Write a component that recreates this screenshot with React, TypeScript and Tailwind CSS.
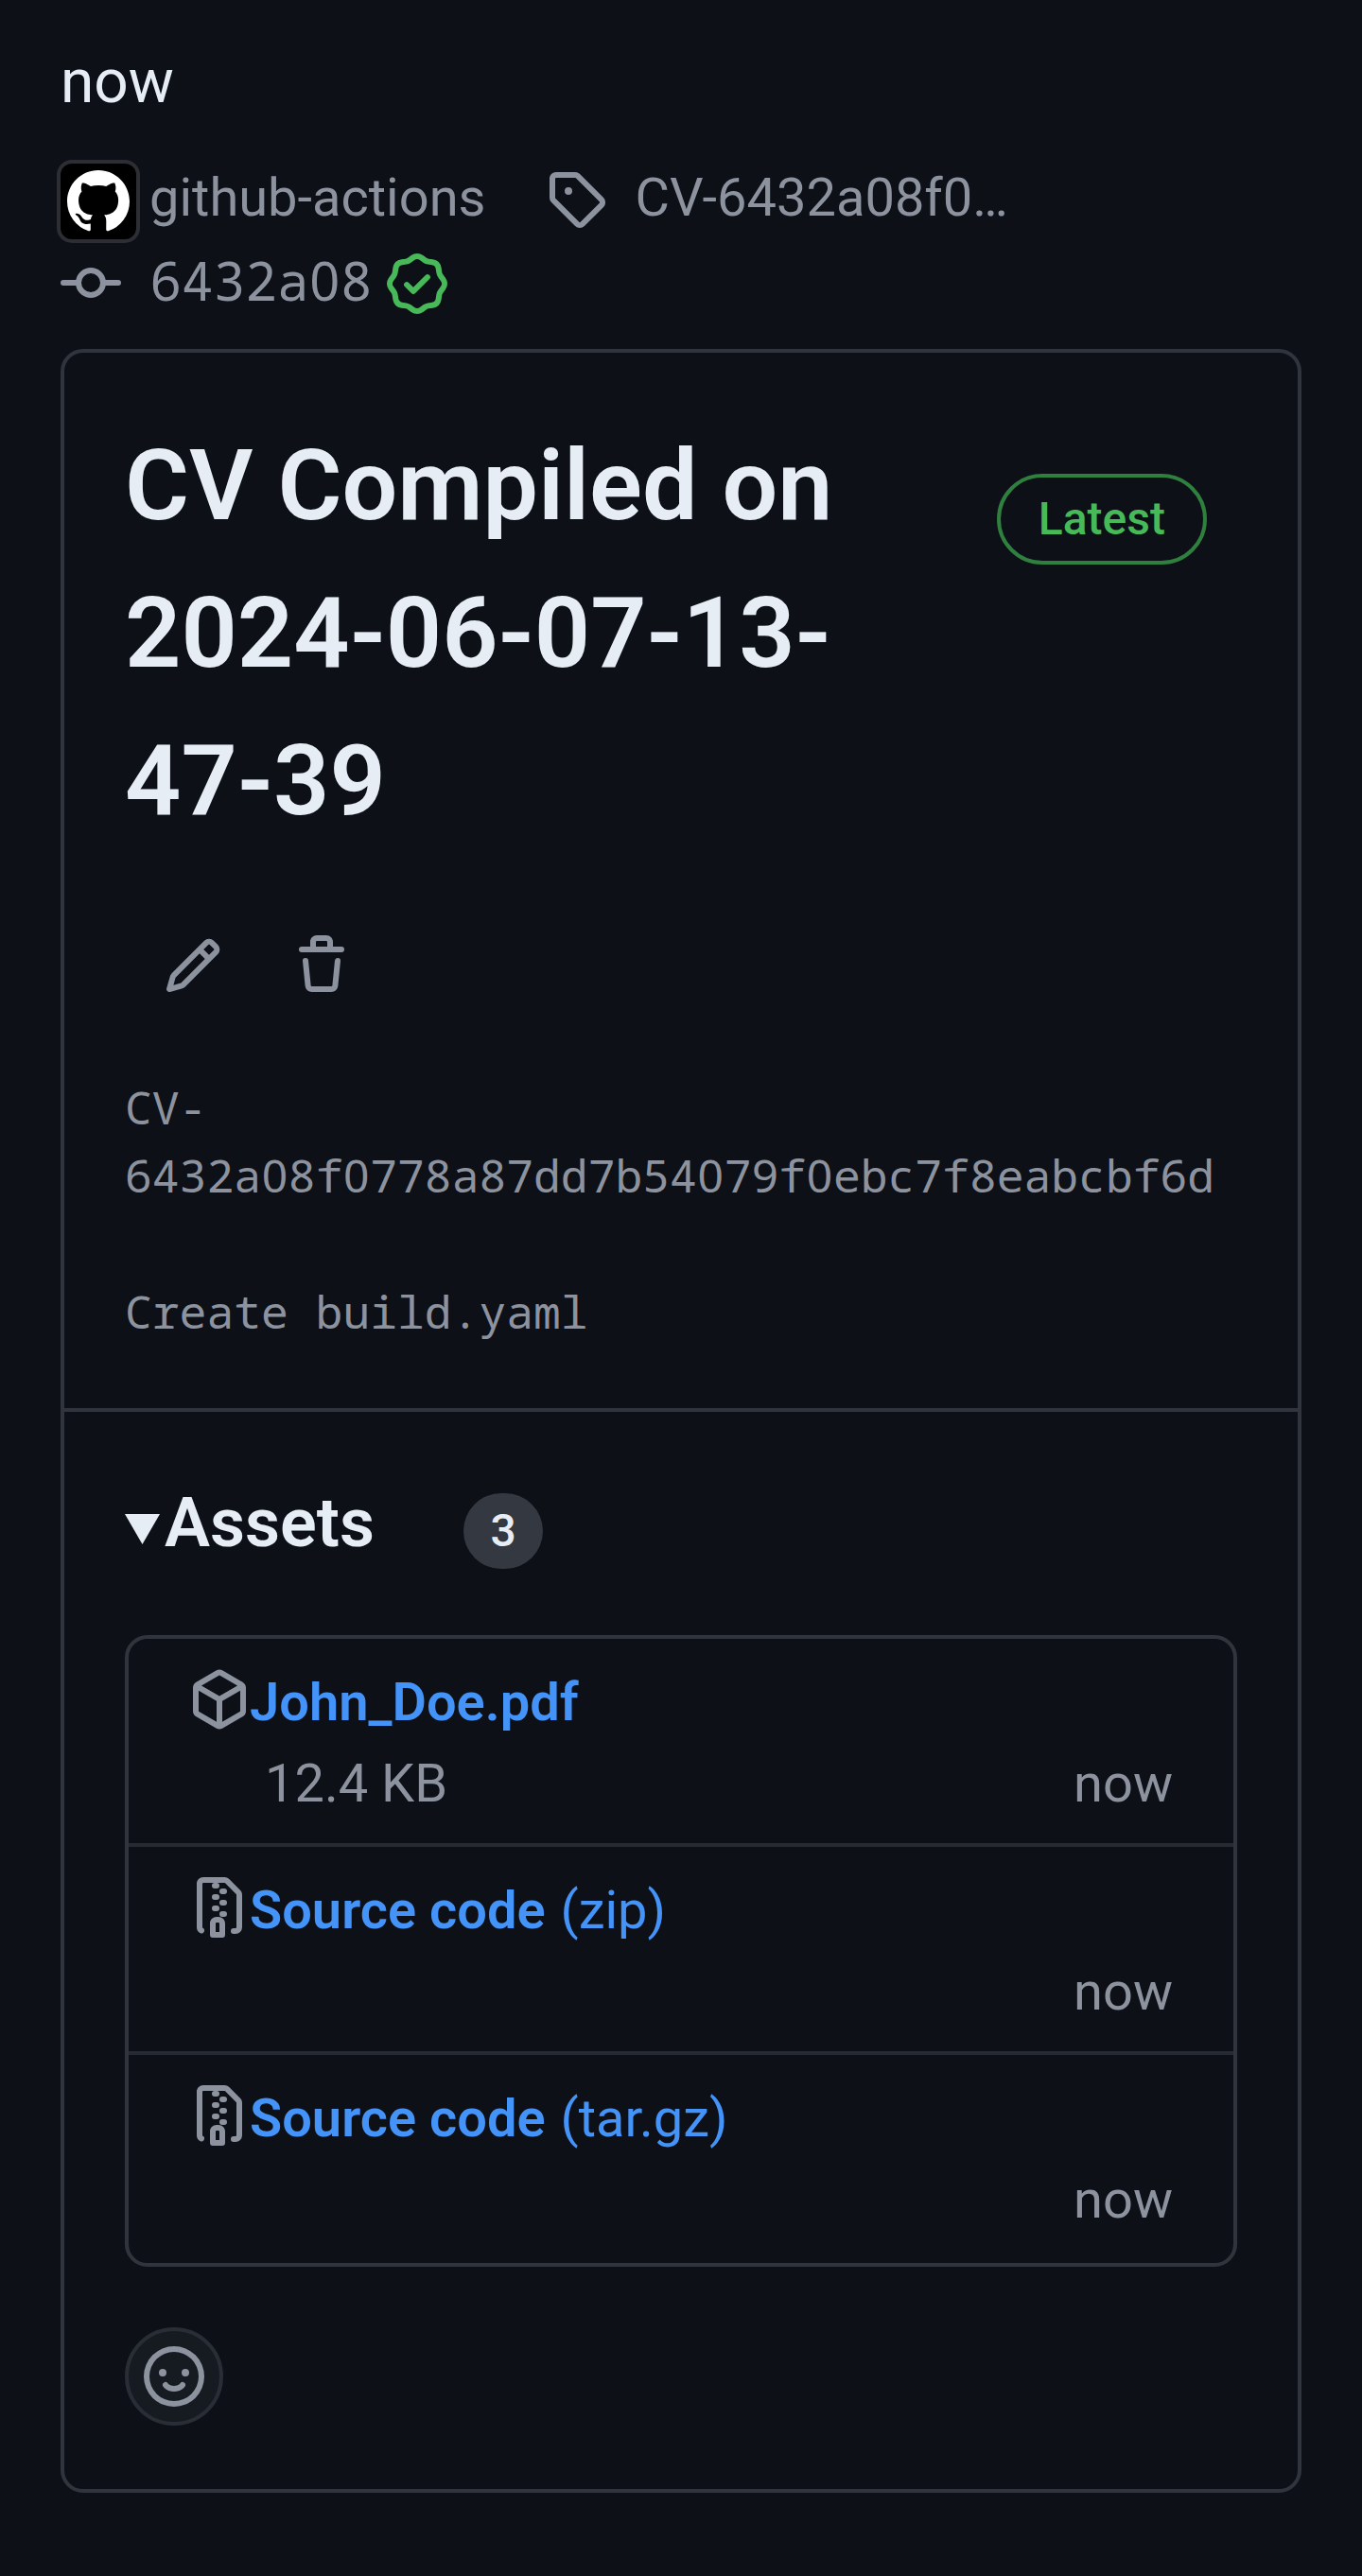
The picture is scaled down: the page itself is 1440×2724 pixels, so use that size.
import { Fragment, type ReactNode } from "react";

const paths = {
  mark: "M8 0c4.42 0 8 3.58 8 8a8.013 8.013 0 0 1-5.45 7.59c-.4.08-.55-.17-.55-.38 0-.27.01-1.13.01-2.2 0-.75-.25-1.23-.54-1.48 1.78-.2 3.65-.88 3.65-3.95 0-.88-.31-1.59-.82-2.15.08-.2.36-1.02-.08-2.12 0 0-.67-.22-2.2.82-.64-.18-1.32-.27-2-.27-.68 0-1.36.09-2 .27-1.53-1.03-2.2-.82-2.2-.82-.44 1.1-.16 1.92-.08 2.12-.51.56-.82 1.28-.82 2.15 0 3.06 1.86 3.75 3.64 3.95-.23.2-.44.55-.51 1.07-.46.21-1.61.55-2.33-.66-.15-.24-.6-.83-1.23-.82-.67.01-.27.38.01.53.34.19.73.9.82 1.13.16.45.68 1.31 2.69.94 0 .67.01 1.3.01 1.49 0 .21-.15.45-.55.38A7.995 7.995 0 0 1 0 8c0-4.42 3.58-8 8-8Z",
  tag: "M1 7.775V2.75C1 1.784 1.784 1 2.75 1h5.025c.464 0 .91.184 1.238.513l6.25 6.25a1.75 1.75 0 0 1 0 2.474l-5.026 5.026a1.75 1.75 0 0 1-2.474 0l-6.25-6.25A1.752 1.752 0 0 1 1 7.775Zm1.5 0c0 .066.026.13.073.177l6.25 6.25a.25.25 0 0 0 .354 0l5.025-5.025a.25.25 0 0 0 0-.354l-6.25-6.25a.25.25 0 0 0-.177-.073H2.75a.25.25 0 0 0-.25.25ZM6 5a1 1 0 1 1 0 2 1 1 0 0 1 0-2Z",
  commit: "M11.93 8.5a4.002 4.002 0 0 1-7.86 0H.75a.75.75 0 0 1 0-1.5h3.32a4.002 4.002 0 0 1 7.86 0h3.32a.75.75 0 0 1 0 1.5Zm-1.43-.75a2.5 2.5 0 1 0-5 0 2.5 2.5 0 0 0 5 0Z",
  verified: "m9.585.52.929.68c.153.112.331.186.518.215l1.138.175a2.678 2.678 0 0 1 2.24 2.24l.174 1.139c.029.187.103.365.215.518l.68.928a2.677 2.677 0 0 1 0 3.17l-.68.928a1.174 1.174 0 0 0-.215.518l-.175 1.138a2.678 2.678 0 0 1-2.241 2.241l-1.138.175a1.17 1.17 0 0 0-.518.215l-.928.68a2.677 2.677 0 0 1-3.17 0l-.928-.68a1.174 1.174 0 0 0-.518-.215L3.83 14.41a2.678 2.678 0 0 1-2.24-2.24l-.175-1.138a1.17 1.17 0 0 0-.215-.518l-.68-.928a2.677 2.677 0 0 1 0-3.17l.68-.928c.112-.153.186-.331.215-.518l.175-1.14a2.678 2.678 0 0 1 2.24-2.24l1.139-.175c.187-.029.365-.103.518-.215l.928-.68a2.677 2.677 0 0 1 3.17 0ZM7.303 1.728l-.927.68a2.67 2.67 0 0 1-1.18.489l-1.137.174a1.179 1.179 0 0 0-.987.987l-.174 1.136a2.677 2.677 0 0 1-.489 1.18l-.68.928a1.18 1.18 0 0 0 0 1.394l.68.927c.256.348.424.753.489 1.18l.174 1.137c.078.509.478.909.987.987l1.136.174a2.67 2.67 0 0 1 1.18.489l.928.68c.414.305.979.305 1.394 0l.927-.68a2.67 2.67 0 0 1 1.18-.489l1.137-.174a1.18 1.18 0 0 0 .987-.987l.174-1.136a2.67 2.67 0 0 1 .489-1.18l.68-.928a1.176 1.176 0 0 0 0-1.394l-.68-.927a2.686 2.686 0 0 1-.489-1.18l-.174-1.137a1.179 1.179 0 0 0-.987-.987l-1.136-.174a2.677 2.677 0 0 1-1.18-.489l-.928-.68a1.176 1.176 0 0 0-1.394 0ZM11.28 6.78l-3.75 3.75a.75.75 0 0 1-1.06 0L4.72 8.78a.751.751 0 0 1 .018-1.042.751.751 0 0 1 1.042-.018L7 8.94l3.22-3.22a.751.751 0 0 1 1.042.018.751.751 0 0 1 .018 1.042Z",
  pencil: "M11.013 1.427a1.75 1.75 0 0 1 2.474 0l1.086 1.086a1.75 1.75 0 0 1 0 2.474l-8.61 8.61c-.21.21-.47.364-.756.445l-3.251.93a.75.75 0 0 1-.927-.928l.929-3.25c.081-.286.235-.547.445-.758l8.61-8.61Zm.176 4.823L9.75 4.81l-6.286 6.287a.253.253 0 0 0-.064.108l-.558 1.953 1.953-.558a.253.253 0 0 0 .108-.064Zm1.238-3.763a.25.25 0 0 0-.354 0L10.811 3.75l1.439 1.44 1.263-1.263a.25.25 0 0 0 0-.354Z",
  trash: "M11 1.75V3h2.25a.75.75 0 0 1 0 1.5H2.75a.75.75 0 0 1 0-1.5H5V1.75C5 .784 5.784 0 6.75 0h2.5C10.216 0 11 .784 11 1.75ZM4.496 6.675l.66 6.6a.25.25 0 0 0 .249.225h5.19a.25.25 0 0 0 .249-.225l.66-6.6a.75.75 0 0 1 1.492.149l-.66 6.6A1.748 1.748 0 0 1 10.595 15h-5.19a1.75 1.75 0 0 1-1.741-1.575l-.66-6.6a.75.75 0 1 1 1.492-.15ZM6.5 1.75V3h3V1.75a.25.25 0 0 0-.25-.25h-2.5a.25.25 0 0 0-.25.25Z",
  box: "m8.878.392 5.25 3.045c.54.314.872.89.872 1.514v6.098a1.75 1.75 0 0 1-.872 1.514l-5.25 3.045a1.75 1.75 0 0 1-1.756 0l-5.25-3.045A1.75 1.75 0 0 1 1 11.049V4.951c0-.624.332-1.201.872-1.514L7.122.392a1.75 1.75 0 0 1 1.756 0ZM7.875 1.69l-4.63 2.685L8 7.133l4.755-2.758-4.63-2.685a.248.248 0 0 0-.25 0ZM2.5 5.677v5.372c0 .09.047.171.125.216l4.625 2.683V8.432Zm6.25 8.271 4.625-2.683a.25.25 0 0 0 .125-.216V5.677L8.75 8.432Z",
  zip: "M3.5 1.75v11.5c0 .09.048.173.126.217a.75.75 0 0 1-.752 1.298A1.748 1.748 0 0 1 2 13.25V1.75C2 .784 2.784 0 3.75 0h5.586c.464 0 .909.185 1.237.513l2.914 2.914c.329.328.513.773.513 1.237v8.586A1.75 1.75 0 0 1 12.25 15h-.5a.75.75 0 0 1 0-1.5h.5a.25.25 0 0 0 .25-.25V4.664a.25.25 0 0 0-.073-.177L9.513 1.573a.25.25 0 0 0-.177-.073H7.25a.75.75 0 0 1 0 1.5h-.5a.75.75 0 0 1 0-1.5h-3a.25.25 0 0 0-.25.25Zm3.75 8.75h.5c.966 0 1.75.784 1.75 1.75v3a.75.75 0 0 1-.75.75h-2.5a.75.75 0 0 1-.75-.75v-3c0-.966.784-1.75 1.75-1.75ZM6 5.25a.75.75 0 0 1 .75-.75h.5a.75.75 0 0 1 0 1.5h-.5A.75.75 0 0 1 6 5.25Zm.75 2.25h.5a.75.75 0 0 1 0 1.5h-.5a.75.75 0 0 1 0-1.5ZM8 6.75A.75.75 0 0 1 8.75 6h.5a.75.75 0 0 1 0 1.5h-.5A.75.75 0 0 1 8 6.75ZM8.75 3h.5a.75.75 0 0 1 0 1.5h-.5a.75.75 0 0 1 0-1.5ZM8 9.75A.75.75 0 0 1 8.75 9h.5a.75.75 0 0 1 0 1.5h-.5A.75.75 0 0 1 8 9.75Zm-1 2.5v2.25h1v-2.25a.25.25 0 0 0-.25-.25h-.5a.25.25 0 0 0-.25.25Z",
  smiley: "M8 0a8 8 0 1 1 0 16A8 8 0 0 1 8 0ZM1.5 8a6.5 6.5 0 1 0 13 0 6.5 6.5 0 0 0-13 0ZM12 7a1 1 0 1 1-2 0 1 1 0 0 1 2 0ZM5 8a1 1 0 1 1 0-2 1 1 0 0 1 0 2ZM5.32 9.636a.75.75 0 0 1 1.038.175c.105.122.225.23.357.319.264.178.683.37 1.285.37.602 0 1.02-.192 1.285-.37.132-.09.252-.197.357-.319a.75.75 0 0 1 1.222.87c-.2.27-.45.49-.738.681C9.652 11.692 8.946 12 8 12c-.946 0-1.652-.308-2.126-.638a3.3 3.3 0 0 1-.738-.681.75.75 0 0 1 .184-1.045Z",
};

function Icon({ name, className = "size-16" }: { name: keyof typeof paths; className?: string }) {
  return (
    <svg viewBox="0 0 16 16" fill="currentColor" className={`shrink-0 ${className}`} aria-hidden="true">
      <path d={paths[name]} />
    </svg>
  );
}

/* Monospaced text with undotted zeros, kept on the 0.6em grid. */
function Mono({ children }: { children: string }) {
  return children.split("0").map((part, i) => (
    <Fragment key={i}>
      {i > 0 && (
        <span className="ml-[0.014em] font-['Noto_Sans',sans-serif] leading-[0] tracking-[0.014em]">0</span>
      )}
      {part}
    </Fragment>
  ));
}

type AssetProps = { icon: "box" | "zip"; name: string; kind?: string; size?: string };

function Asset({ icon, name, kind, size }: AssetProps) {
  return (
    <li className="h-[220px] border-b-4 border-[#262a32] px-16 pt-[25px] text-[56px] leading-[84px] last:border-b-0">
      <div className="flex items-start text-[#4493f8]">
        <Icon name={icon} className="mt-[7px] size-16 text-[#8d939e]" />
        <a className="whitespace-pre">
          <span className="font-semibold">{name}</span>
          {kind && <span className="ml-[2px]"> {kind}</span>}
        </a>
      </div>
      <div className="mt-[2px] flex justify-between pl-20">
        <span>{size}</span>
        <span>now</span>
      </div>
    </li>
  );
}

function Row({ children, className = "" }: { children: ReactNode; className?: string }) {
  return <div className={`flex h-[84px] items-center text-[56px] leading-[84px] ${className}`}>{children}</div>;
}

export default function App() {
  return (
    <main className="h-[2724px] w-[1440px] overflow-hidden bg-[#0d1017] px-16 pt-[39px] font-['Roboto',sans-serif] text-[#8d939e]">
      <p className="text-[64px] leading-[96px] text-[#e6edf5]">now</p>

      <Row className="mt-8">
        <span className="mt-2 flex size-20 shrink-0 items-center justify-center rounded-xl bg-black ring-4 ring-[#2c2e33]">
          <Icon name="mark" className="size-[66px] text-white" />
        </span>
        <span className="ml-[14px]">github-actions</span>
        <Icon name="tag" className="mt-[2px] ml-[63.5px] size-16" />
        <span className="ml-[30.5px]">CV-6432a08f0…</span>
      </Row>
      <Row className="mt-[3px]">
        <Icon name="commit" className="mt-2 size-16" />
        <span className="ml-[30.5px] font-['Noto_Sans_Mono',monospace]">
          <Mono>6432a08</Mono>
        </span>
        <Icon name="verified" className="mt-2 ml-[15.5px] size-16 text-[#48b958]" />
      </Row>

      <article className="mt-[31px] rounded-3xl border-4 border-[#30353d]">
        <section className="h-[1120px] border-b-4 border-[#30353d] px-16 pt-[63px]">
          <div className="flex items-start justify-between">
            <h1 className="text-[104px] leading-[156px] font-semibold text-[#e6edf5]">
              CV Compiled on
              <br />
              2024-06-07-13-
              <br />
              47-39
            </h1>
            <span className="mt-[65px] mr-8 flex h-24 items-center rounded-full border-4 border-[#2f7f3f] px-10 text-[48px] leading-[88px] font-medium text-[#48b958]">
              Latest
            </span>
          </div>
          <div className="mt-[85px] ml-10 flex gap-[72px]">
            <Icon name="pencil" />
            <Icon name="trash" />
          </div>
          <div className="mt-[82px] font-['Noto_Sans_Mono',monospace] text-[48px] leading-[72px]">
            <p>
              CV-
              <br />
              <Mono>6432a08f0778a87dd7b54079f0ebc7f8eabcbf6d</Mono>
            </p>
            <p className="mt-[72px]">Create build.yaml</p>
          </div>
        </section>

        <section className="px-16 pt-16 pb-[67px]">
          <h2 className="flex h-[108px] items-center text-[72px] leading-[108px] font-semibold text-[#e6edf5]">
            <svg viewBox="0 0 37 32" className="mt-[11px] h-8 w-[37px]" fill="currentColor" aria-hidden="true">
              <path d="M0 0h37L18.500 32Z" />
            </svg>
            <span className="ml-[5px]">Assets</span>
            <span className="mt-[16px] ml-[94px] flex h-20 w-[84px] items-center justify-center rounded-full bg-[#343840] text-[48px] leading-[80px] font-medium">
              3
            </span>
          </h2>
          <ul className="mt-16 rounded-3xl border-4 border-[#30353d]">
            <Asset icon="box" name="John_Doe.pdf" size="12.4 KB" />
            <Asset icon="zip" name="Source code" kind="(zip)" />
            <Asset icon="zip" name="Source code" kind="(tar.gz)" />
          </ul>
          <button className="mt-16 flex size-[104px] items-center justify-center rounded-full border-4 border-[#292d35] bg-[#161b22]">
            <Icon name="smiley" />
          </button>
        </section>
      </article>
    </main>
  );
}
